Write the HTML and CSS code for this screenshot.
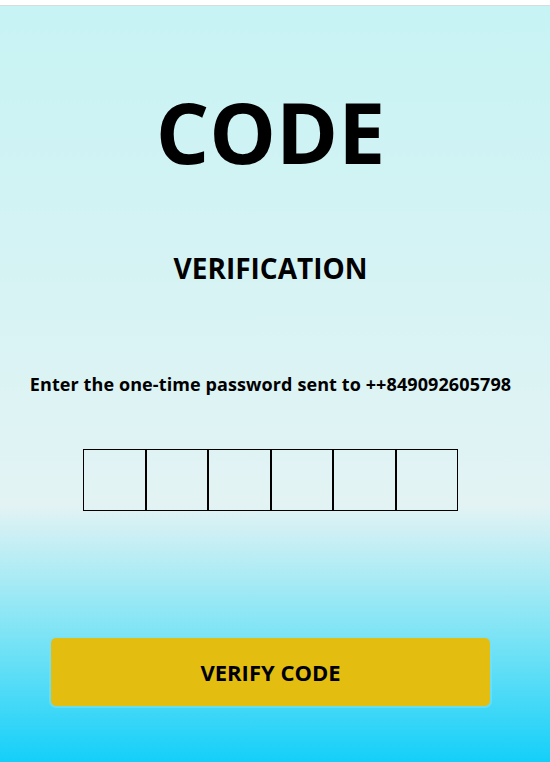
FILE: index.html
```html
<!DOCTYPE html>
<html lang="en">
<head>
<meta charset="utf-8">
<title>Code Verification</title>
<link rel="stylesheet" href="styles.css">
</head>
<body>
<div class="topbar"></div>
<main class="page">
  <h1 class="title">CODE</h1>
  <h2 class="subtitle">VERIFICATION</h2>
  <p class="hint">Enter the one-time password sent to ++849092605798</p>
  <div class="otp">
    <input class="otp-box" type="text" maxlength="1">
    <input class="otp-box" type="text" maxlength="1">
    <input class="otp-box" type="text" maxlength="1">
    <input class="otp-box" type="text" maxlength="1">
    <input class="otp-box" type="text" maxlength="1">
    <input class="otp-box" type="text" maxlength="1">
  </div>
  <button class="verify" type="button">VERIFY CODE</button>
</main>
</body>
</html>
```
FILE: styles.css
```css
html, body {
  margin: 0;
  padding: 0;
}
body {
  width: 550px;
  height: 762px;
  overflow: hidden;
  font-family: "Open Sans", "Noto Sans", sans-serif;
  color: #000;
  background: #ffffff;
  display: flex;
  flex-direction: column;
}
.topbar {
  height: 5px;
  background: #fdfefe;
  border-bottom: 1px solid #d6dcdc;
}
.page {
  flex: 1;
  display: flex;
  flex-direction: column;
  align-items: center;
  padding-right: 9px;
  background: linear-gradient(to bottom, #c7f3f4 0%, #e3f3f4 66%, #7ee4f5 83%, #14cff9 100%);
}
.title {
  margin: 84px 0 0;
  font-size: 84px;
  line-height: 1;
  font-weight: 700;
  letter-spacing: 0;
}
.subtitle {
  margin: 80px 0 0;
  font-size: 28px;
  line-height: 1;
  font-weight: 700;
}
.hint {
  margin: 93px 0 0;
  font-size: 18px;
  line-height: 1;
  font-weight: 700;
  letter-spacing: 0.1px;
  white-space: nowrap;
}
.otp {
  display: flex;
  margin-top: 56px;
}
.otp-box {
  box-sizing: border-box;
  width: 62.5px;
  height: 62px;
  margin: 0;
  border: 1px solid #000;
  background: transparent;
  padding: 0;
  outline: none;
}
.verify {
  margin-top: 127px;
  width: 439px;
  height: 68px;
  border: none;
  border-radius: 5px;
  background: #e3be11;
  font-family: inherit;
  font-size: 22px;
  font-weight: 700;
  color: #000;
  box-shadow: 0 0 0 2px rgba(120, 225, 245, 0.6);
}
```
